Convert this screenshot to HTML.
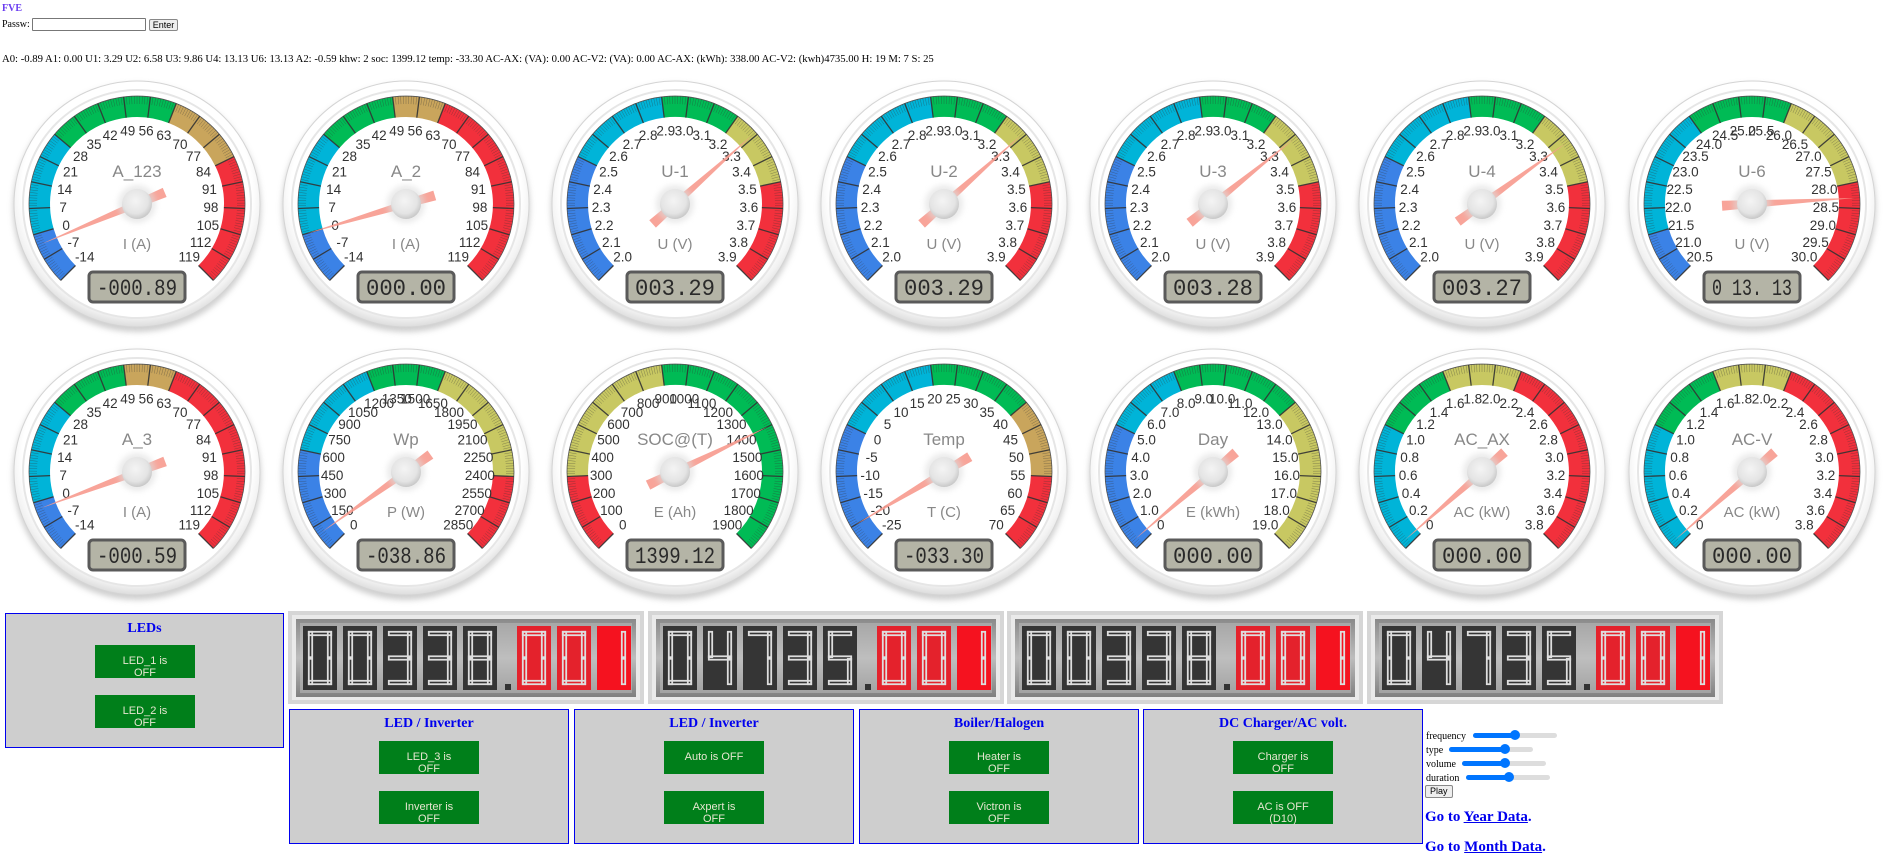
<!DOCTYPE html>
<html><head><meta charset="utf-8">
<style>
body{margin:0;width:1899px;height:861px;overflow:hidden;background:#fff;font-family:"Liberation Serif",serif;position:relative}
.abs{position:absolute}
.box{position:absolute;background:#cecece;border:1px solid #0000ee;box-sizing:border-box}
.box h3{margin:0;position:absolute;left:0;right:0;text-align:center;font:bold 14px "Liberation Serif",serif;color:#0000ee}
.btn{position:absolute;width:100px;height:33px;background:#007f1a;color:#e6e6d0;font:11px "Liberation Sans",sans-serif;text-align:center;line-height:12px;box-sizing:border-box;padding-top:10px}
.sl{position:absolute;height:5px;background:#ddd;border-radius:3px}
.sl i{position:absolute;left:0;top:0;height:5px;background:#0075ff;border-radius:3px}
.sl b{position:absolute;top:-3px;width:10px;height:10px;border-radius:50%;background:#0075ff}
a{color:#0000ee}
</style></head><body>
<div class="abs" style="left:2px;top:3px;font:bold 10px 'Liberation Serif',serif;color:#6a3cf0">FVE</div>
<div class="abs" style="left:2px;top:18px;font:10px 'Liberation Serif',serif;">Passw: <span style="display:inline-block;width:112px;height:11px;border:1px solid #777;vertical-align:middle;border-radius:1px"></span> <span style="display:inline-block;font:9px 'Liberation Sans',sans-serif;border:1px solid #888;background:#eee;border-radius:2px;padding:0 3px;vertical-align:middle">Enter</span></div>
<div class="abs" style="left:2px;top:53px;font:10.7px 'Liberation Serif',serif;white-space:nowrap">A0: -0.89 A1: 0.00 U1: 3.29 U2: 6.58 U3: 9.86 U4: 13.13 U6: 13.13 A2: -0.59 khw: 2 soc: 1399.12 temp: -33.30 AC-AX: (VA): 0.00 AC-V2: (VA): 0.00 AC-AX: (kWh): 338.00 AC-V2: (kwh)4735.00 H: 19 M: 7 S: 25</div>

<svg id="g" class="abs" style="left:0;top:0" width="1899" height="861"></svg>

<div class="box" style="left:5px;top:613px;width:279px;height:135px"><h3 style="top:7px">LEDs</h3>
<div class="btn" style="left:89px;top:31px">LED_1 is<br>OFF</div>
<div class="btn" style="left:89px;top:81px">LED_2 is<br>OFF</div></div>

<div class="box" style="left:289px;top:709px;width:280px;height:135px"><h3 style="top:6px">LED / Inverter</h3>
<div class="btn" style="left:89px;top:31px">LED_3 is<br>OFF</div>
<div class="btn" style="left:89px;top:81px">Inverter is<br>OFF</div></div>
<div class="box" style="left:574px;top:709px;width:280px;height:135px"><h3 style="top:6px">LED / Inverter</h3>
<div class="btn" style="left:89px;top:31px">Auto is OFF</div>
<div class="btn" style="left:89px;top:81px">Axpert is<br>OFF</div></div>
<div class="box" style="left:859px;top:709px;width:280px;height:135px"><h3 style="top:6px">Boiler/Halogen</h3>
<div class="btn" style="left:89px;top:31px">Heater is<br>OFF</div>
<div class="btn" style="left:89px;top:81px">Victron is<br>OFF</div></div>
<div class="box" style="left:1143px;top:709px;width:280px;height:135px"><h3 style="top:6px">DC Charger/AC volt.</h3>
<div class="btn" style="left:89px;top:31px">Charger is<br>OFF</div>
<div class="btn" style="left:89px;top:81px">AC is OFF<br>(D10)</div></div>

<div class="abs" style="left:1426px;top:730px;font:10px 'Liberation Serif',serif;line-height:14px">frequency<br>type<br>volume<br>duration</div>
<div class="sl" style="left:1473px;top:733px;width:84px"><i style="width:42px"></i><b style="left:37px"></b></div>
<div class="sl" style="left:1449px;top:747px;width:84px"><i style="width:56px"></i><b style="left:51px"></b></div>
<div class="sl" style="left:1462px;top:761px;width:84px"><i style="width:43px"></i><b style="left:38px"></b></div>
<div class="sl" style="left:1466px;top:775px;width:84px"><i style="width:43px"></i><b style="left:38px"></b></div>
<div class="abs" style="left:1425px;top:785px;font:9px 'Liberation Sans',sans-serif;border:1px solid #888;background:#eee;border-radius:2px;padding:0 4px;line-height:11px">Play</div>
<div class="abs" style="left:1425px;top:809px;font:bold 15px 'Liberation Serif',serif;color:#0000ee">Go to <a href="#">Year Data</a>.</div>
<div class="abs" style="left:1425px;top:839px;font:bold 15px 'Liberation Serif',serif;color:#0000ee">Go to <a href="#">Month Data</a>.</div>

<script>
var NS="http://www.w3.org/2000/svg",svg=document.getElementById('g');
var defs='<defs><radialGradient id="disc" cx="50%" cy="45%" r="55%"><stop offset="0.85" stop-color="#fff"/><stop offset="0.93" stop-color="#f2f2f2"/><stop offset="1" stop-color="#dcdcdc"/></radialGradient>'+
'<radialGradient id="cap" cx="45%" cy="40%" r="60%"><stop offset="0" stop-color="#f4f4f4"/><stop offset="0.7" stop-color="#e4e4e4"/><stop offset="1" stop-color="#c8c8c8"/></radialGradient>'+
'<filter id="sh" x="-20%" y="-20%" width="140%" height="140%"><feGaussianBlur stdDeviation="3"/></filter>'+
'<linearGradient id="od" x1="0" y1="0" x2="0" y2="1"><stop offset="0" stop-color="#8a8a8a"/><stop offset="0.5" stop-color="#bdbdbd"/><stop offset="1" stop-color="#808080"/></linearGradient></defs>';
var h=defs;
var C={b:'#3b82e6',c:'#00b4d8',g:'#00bb55',t:'#c9a55c',r:'#f2303c',y:'#c8c862'};
function pt(cx,cy,r,a){a=a*Math.PI/180;return [cx+r*Math.sin(a),cy-r*Math.cos(a)];}
function arc(cx,cy,r,a1,a2){var p=pt(cx,cy,r,a1),q=pt(cx,cy,r,a2);return 'M'+p[0].toFixed(1)+' '+p[1].toFixed(1)+' A'+r+' '+r+' 0 '+((a2-a1)>180?1:0)+' 1 '+q[0].toFixed(1)+' '+q[1].toFixed(1);}
function gauge(cx,cy,o){
 var mn=o.min,mx=o.max,n=o.n,A=function(v){return -135+270*(v-mn)/(mx-mn);};
 h+='<circle cx="'+cx+'" cy="'+(cy+4)+'" r="124" fill="#bbb" filter="url(#sh)" opacity="0.7"/>';
 h+='<circle cx="'+cx+'" cy="'+cy+'" r="123" fill="url(#disc)" stroke="#d4d4d4" stroke-width="1"/>';
 h+='<circle cx="'+cx+'" cy="'+cy+'" r="114" fill="#fff" stroke="#e6e6e6" stroke-width="2"/>';
 o.seg.forEach(function(s){h+='<path d="'+arc(cx,cy,97.5,A(s[0]),A(s[1]))+'" fill="none" stroke="'+C[s[2]]+'" stroke-width="21"/>';});
 h+='<path d="'+arc(cx,cy,108,-135,135)+'" fill="none" stroke="#555" stroke-width="0.8"/>';
 for(var i=0;i<=n*10;i++){var a=-135+270*i/(n*10),maj=i%10==0,p=pt(cx,cy,maj?87:100,a),q=pt(cx,cy,108,a);
  h+='<line x1="'+p[0].toFixed(1)+'" y1="'+p[1].toFixed(1)+'" x2="'+q[0].toFixed(1)+'" y2="'+q[1].toFixed(1)+'" stroke="#333" stroke-width="'+(maj?1.3:0.4)+'" opacity="'+(maj?0.9:0.6)+'"/>';}
 for(var i=0;i<=n;i++){var v=mn+(mx-mn)*i/n,a=-135+270*i/n,p=pt(cx,cy,74,a);
  var t=o.f?o.f(v):Math.round(v);
  h+='<text x="'+p[0].toFixed(1)+'" y="'+(p[1]+5).toFixed(1)+'" text-anchor="middle" font-family="Liberation Sans,sans-serif" font-size="13.5" fill="#333">'+t+'</text>';}
 h+='<text x="'+cx+'" y="'+(cy-27)+'" text-anchor="middle" font-family="Liberation Sans,sans-serif" font-size="17" fill="#888">'+o.title+'</text>';
 h+='<text x="'+cx+'" y="'+(cy+45)+'" text-anchor="middle" font-family="Liberation Sans,sans-serif" font-size="15" fill="#888">'+o.unit+'</text>';
 h+='<rect x="'+(cx-48)+'" y="'+(cy+68)+'" width="96" height="30" rx="4" fill="#b4b4a6" stroke="#5a5a5a" stroke-width="3"/>';
 h+='<text x="'+cx+'" y="'+(cy+91)+'" text-anchor="middle" font-family="Liberation Mono,monospace" font-size="23" fill="#2a2a2a" textLength="80" lengthAdjust="spacingAndGlyphs">'+o.lcd+'</text>';
 var v=Math.max(mn,Math.min(mx,o.v)),a=A(v),tip=pt(cx,cy,103,a),tl=pt(cx,cy,-30,a),l=pt(cx,cy,5,a-90),r=pt(cx,cy,5,a+90);
 h+='<polygon points="'+tip.join(',')+' '+(l[0]+tl[0]-cx)+','+(l[1]+tl[1]-cy)+' '+(r[0]+tl[0]-cx)+','+(r[1]+tl[1]-cy)+'" fill="#f79a8e" opacity="0.9"/>';
 h+='<circle cx="'+cx+'" cy="'+cy+'" r="19" fill="#ddd" opacity="0.6" filter="url(#sh)"/>';
 h+='<circle cx="'+cx+'" cy="'+cy+'" r="15" fill="url(#cap)"/>';
}
var f1=function(v){return (Math.abs(v)<1e-9)?'0':v.toFixed(1);};
var segA=[[-14,0,'b'],[0,28,'c'],[28,63,'g'],[63,84,'t'],[84,119,'r']];
var segA2=[[-14,0,'b'],[0,28,'c'],[28,49,'g'],[49,63,'t'],[63,119,'r']];
var segU=[[2,2.5,'b'],[2.5,2.9,'c'],[2.9,3.2,'g'],[3.2,3.5,'y'],[3.5,3.9,'r']];
var segAC=[[0,1,'c'],[1,1.6,'g'],[1.6,2.2,'y'],[2.2,3.8,'r']];
var X=[137,406,675,944,1213,1482,1752];
gauge(X[0],204,{min:-14,max:119,n:19,seg:segA,title:'A_123',unit:'I (A)',lcd:'-000.89',v:-3});
gauge(X[1],204,{min:-14,max:119,n:19,seg:segA2,title:'A_2',unit:'I (A)',lcd:'000.00',v:0});
var us=[3.29,3.29,3.31,3.33],ul=['003.29','003.29','003.28','003.27'];
for(var k=0;k<4;k++)gauge(X[2+k],204,{min:2,max:3.9,n:19,seg:segU,f:f1,title:'U-'+(k+1),unit:'U (V)',lcd:ul[k],v:us[k]});
gauge(X[6],204,{min:20.5,max:30,n:19,seg:[[20.5,21.5,'b'],[21.5,24,'c'],[24,26,'g'],[26,28,'y'],[28,30,'r']],f:f1,title:'U-6',unit:'U (V)',lcd:'0 13. 13',v:28.3});
gauge(X[0],472,{min:-14,max:119,n:19,seg:segA2,title:'A_3',unit:'I (A)',lcd:'-000.59',v:-2});
gauge(X[1],472,{min:0,max:2850,n:19,seg:[[0,600,'b'],[600,1200,'c'],[1200,1650,'g'],[1650,2400,'y'],[2400,2850,'r']],title:'Wp',unit:'P (W)',lcd:'-038.86',v:100});
gauge(X[2],472,{min:0,max:1900,n:19,seg:[[0,300,'r'],[300,900,'y'],[900,1900,'g']],title:'SOC@(T)',unit:'E (Ah)',lcd:'1399.12',v:1400});
gauge(X[3],472,{min:-25,max:70,n:19,seg:[[-25,0,'b'],[0,20,'c'],[20,40,'g'],[40,55,'t'],[55,70,'r']],title:'Temp',unit:'T (C)',lcd:'-033.30',v:-20});
gauge(X[4],472,{min:0,max:19,n:19,seg:[[0,5,'b'],[5,8,'c'],[8,13,'g'],[13,19,'y']],f:f1,title:'Day',unit:'E (kWh)',lcd:'000.00',v:0.3});
gauge(X[5],472,{min:0,max:3.8,n:19,seg:segAC,f:f1,title:'AC_AX',unit:'AC (kW)',lcd:'000.00',v:0.05});
gauge(X[6],472,{min:0,max:3.8,n:19,seg:segAC,f:f1,title:'AC-V',unit:'AC (kW)',lcd:'000.00',v:0.05});

var SEG={0:'abcdef',1:'bc',2:'abged',3:'abgcd',4:'fgbc',5:'afgcd',6:'afgedc',7:'abc',8:'abcdefg',9:'abcdfg'};
function digit(x,y,d){var w=24,hh=54,t=5,x0=x+5,y0=y+5,s=SEG[d],r='';
 var R={a:[x0,y0,w,t],d:[x0,y0+hh-t,w,t],g:[x0,y0+hh/2-t/2,w,t],f:[x0,y0,t,hh/2],e:[x0,y0+hh/2,t,hh/2],b:[x0+w-t,y0,t,hh/2],c:[x0+w-t,y0+hh/2,t,hh/2]};
 for(var i=0;i<s.length;i++){var q=R[s[i]];r+='<rect x="'+(q[0]+0.8)+'" y="'+(q[1]+0.8)+'" width="'+(q[2]-1.6)+'" height="'+(q[3]-1.6)+'" fill="none" stroke="#dedede" stroke-width="1.8"/>';}
 return r;}
function odo(x,s){h+='<rect x="'+x+'" y="611" width="356" height="93" fill="#d6d6d6"/>';
 h+='<rect x="'+(x+4)+'" y="615" width="348" height="85" fill="#eaeaea"/>';
 h+='<rect x="'+(x+8)+'" y="619" width="340" height="78" fill="url(#od)"/>';
 h+='<rect x="'+(x+12)+'" y="623" width="332" height="70" fill="#c0c0c0" opacity="0.5"/>';
 var cx=x+15;
 for(var i=0;i<s.length;i++){var ch=s[i];
  if(ch=='.'){h+='<rect x="'+(cx+2)+'" y="684" width="6" height="6" fill="#333"/>';cx+=14;continue;}
  var red=i>s.indexOf('.');var col=red?(i==s.length-1?'#f5121f':'#e4222c'):'#353535';
  h+='<rect x="'+cx+'" y="626" width="34" height="64" fill="'+col+'"/>'+digit(cx,626,ch);cx+=40;}
}
odo(288,'00338.001');odo(648,'04735.001');odo(1007,'00338.001');odo(1367,'04735.001');
svg.innerHTML=h;
</script>
</body></html>
